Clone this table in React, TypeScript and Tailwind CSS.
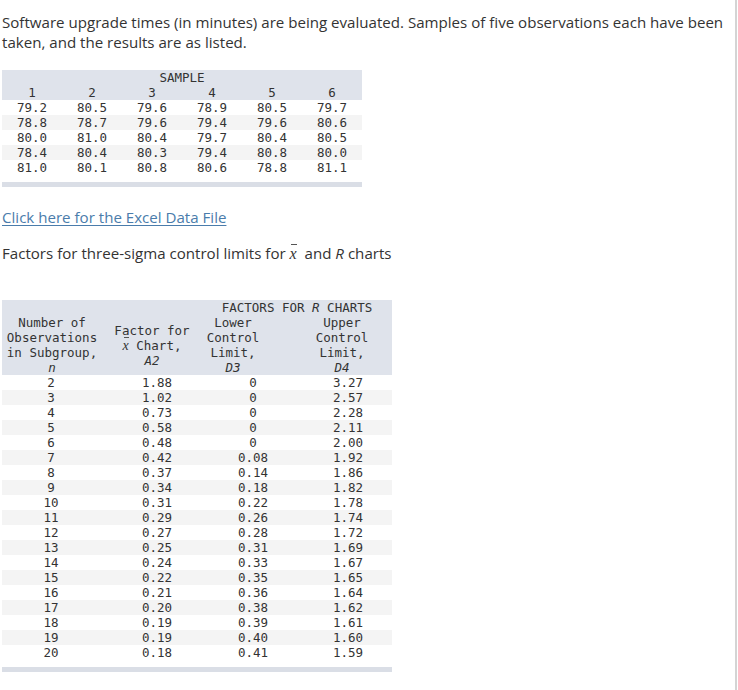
import React from "react";

const samples = [
  ["79.2", "80.5", "79.6", "78.9", "80.5", "79.7"],
  ["78.8", "78.7", "79.6", "79.4", "79.6", "80.6"],
  ["80.0", "81.0", "80.4", "79.7", "80.4", "80.5"],
  ["78.4", "80.4", "80.3", "79.4", "80.8", "80.0"],
  ["81.0", "80.1", "80.8", "80.6", "78.8", "81.1"],
];

const factors: [string, string, string, string][] = [
  ["2", "1.88", "0", "3.27"],
  ["3", "1.02", "0", "2.57"],
  ["4", "0.73", "0", "2.28"],
  ["5", "0.58", "0", "2.11"],
  ["6", "0.48", "0", "2.00"],
  ["7", "0.42", "0.08", "1.92"],
  ["8", "0.37", "0.14", "1.86"],
  ["9", "0.34", "0.18", "1.82"],
  ["10", "0.31", "0.22", "1.78"],
  ["11", "0.29", "0.26", "1.74"],
  ["12", "0.27", "0.28", "1.72"],
  ["13", "0.25", "0.31", "1.69"],
  ["14", "0.24", "0.33", "1.67"],
  ["15", "0.22", "0.35", "1.65"],
  ["16", "0.21", "0.36", "1.64"],
  ["17", "0.20", "0.38", "1.62"],
  ["18", "0.19", "0.39", "1.61"],
  ["19", "0.19", "0.40", "1.60"],
  ["20", "0.18", "0.41", "1.59"],
];

function XBar({ size = "text-[16px]" }: { size?: string }) {
  return (
    <span className={`relative inline-block font-['Liberation_Serif',serif] italic leading-none ${size}`}>
      <span className="absolute left-[1px] right-0 top-[-2px] h-[1px] bg-[#555]" />
      x
    </span>
  );
}

export default function App() {
  return (
    <div className="flex min-h-[690px] bg-white text-[#333]">
      <div className="w-[735px] pl-[2px] pt-[12px] font-['Open_Sans',sans-serif] text-[15.1px] leading-[20px]">
        <p>
          Software upgrade times (in minutes) are being evaluated. Samples of five observations each have been
          taken, and the results are as listed.
        </p>

        <div className="mt-[18px] w-[360px] font-['DejaVu_Sans_Mono',monospace] text-[12.5px] leading-[15px] text-[#333]">
          <div className="bg-[#dfe3eb]">
            <div className="text-center">SAMPLE</div>
            <div className="grid grid-cols-6 text-center">
              {[1, 2, 3, 4, 5, 6].map((n) => (
                <div key={n}>{n}</div>
              ))}
            </div>
          </div>
          {samples.map((row, i) => (
            <div key={i} className={`grid grid-cols-6 text-center ${i % 2 === 1 ? "bg-[#f4f4f4]" : "bg-white"}`}>
              {row.map((v, j) => (
                <div key={j}>{v}</div>
              ))}
            </div>
          ))}
          <div className="mt-[7px] h-[5px] bg-[#dadee6]" />
        </div>

        <p className="mt-[20px]">
          <a className="text-[#4a7cab] underline decoration-1 underline-offset-2" href="#">
            Click here for the Excel Data File
          </a>
        </p>

        <p className="mt-[16px]">
          Factors for three-sigma control limits for <XBar />
          &nbsp; and <span className="italic">R</span> charts
        </p>

        <div className="mt-[37px] w-[390px] font-['DejaVu_Sans_Mono',monospace] text-[12.5px] leading-[15px] text-[#333]">
          <div className="bg-[#dfe3eb]">
            <div className="grid grid-cols-[100px_100px_62px_128px]">
              <div />
              <div />
              <div className="col-span-2 text-center">
                FACTORS FOR <span className="italic">R</span> CHARTS
              </div>
            </div>
            <div className="grid grid-cols-[100px_100px_62px_128px] items-center">
              <div className="text-center">
                <div>Number of</div>
                <div>Observations</div>
                <div>in Subgroup,</div>
                <div className="italic">n</div>
              </div>
              <div className="text-center">
                <div>Factor for</div>
                <div>
                  <XBar size="text-[14px]" /> Chart,
                </div>
                <div className="italic">A2</div>
              </div>
              <div className="text-center">
                <div>Lower</div>
                <div>Control</div>
                <div>Limit,</div>
                <div className="italic">D3</div>
              </div>
              <div className="pl-[28px] text-center">
                <div>Upper</div>
                <div>Control</div>
                <div>Limit,</div>
                <div className="italic">D4</div>
              </div>
            </div>
          </div>
          {factors.map((r, i) => (
            <div
              key={i}
              className={`grid grid-cols-[98px_114px_78px_100px] ${i % 2 === 1 ? "bg-[#f4f4f4]" : "bg-white"}`}
            >
              <div className="text-center">{r[0]}</div>
              <div className="text-center">{r[1]}</div>
              <div className="text-center">{r[2]}</div>
              <div className="pl-[12px] text-center">{r[3]}</div>
            </div>
          ))}
          <div className="mt-[7px] h-[5px] bg-[#dadee6]" />
        </div>
      </div>
      <div className="w-[2px] bg-[#d4d4d4]" />
    </div>
  );
}
